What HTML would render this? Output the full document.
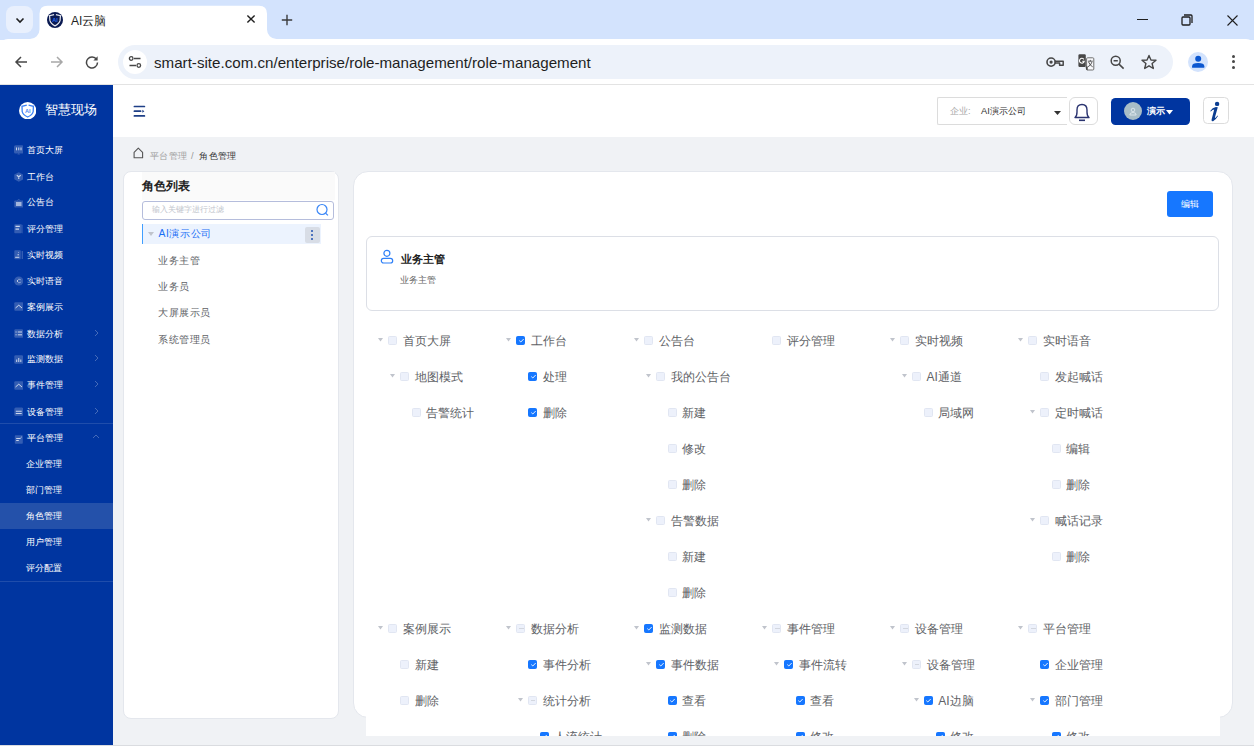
<!DOCTYPE html>
<html><head><meta charset="utf-8">
<style>
*{box-sizing:border-box;margin:0;padding:0}
html,body{width:1254px;height:746px;overflow:hidden;background:#fff;font-family:"Liberation Sans",sans-serif;position:relative}
.a{position:absolute}
.tx{white-space:nowrap;line-height:1}
.ck{width:9px;height:9px;border:1px solid #e1e6f2;border-radius:1.5px;background:#edf1fb}
.tl{font-size:12px;color:#606266;line-height:16px}
</style></head><body>
<!-- TAB STRIP -->
<div class="a" style="left:0;top:0;width:1254px;height:40px;background:#d3e3fd"></div>
<div class="a" style="left:6px;top:6px;width:27px;height:27px;border-radius:8px;background:#e9f0fd"></div>
<svg class="a" style="left:13px;top:13px" width="14" height="14" viewBox="0 0 14 14"><path d="M3.5 5.5 L7 9 L10.5 5.5" fill="none" stroke="#1f1f1f" stroke-width="1.6"/></svg>
<div class="a" style="left:0;top:39px;width:1254px;height:46px;background:#fff;border-radius:8px 8px 0 0"></div>
<!-- active tab -->
<svg class="a" style="left:30px;top:0" width="250" height="40" viewBox="0 0 250 40"><path d="M0 39 A9.5 9.5 0 0 0 9.5 29.5 L9.5 13.7 Q9.5 5.7 17.5 5.7 L229 5.7 Q237 5.7 237 13.7 L237 29.5 A9.5 9.5 0 0 0 246.5 39 Z" fill="#fff"/></svg>
<svg class="a" style="left:47px;top:11.8px" width="16" height="16" viewBox="0 0 16 16"><circle cx="8" cy="8" r="8" fill="#0a1a52"/><path d="M7.1 2.7 L2.6 3.7 L2.9 8.4 Q3.7 11.7 8 13.9 Q12.3 11.7 13.1 8.4 L13.4 3.7 L8.9 2.7" fill="none" stroke="#e8eaf0" stroke-width="1.2"/><text x="8" y="9.6" font-size="5.6" font-family="Liberation Sans" font-weight="bold" fill="#2a6cf0" text-anchor="middle">AI</text></svg>
<div class="a tx" style="left:71px;top:14.5px;font-size:12px;color:#1f1f1f">AI云脑</div>
<svg class="a" style="left:246px;top:14px" width="10" height="10" viewBox="0 0 10 10"><path d="M1.4 1.4 L8.6 8.6 M8.6 1.4 L1.4 8.6" stroke="#1f1f1f" stroke-width="1.4"/></svg>
<svg class="a" style="left:281px;top:14px" width="12" height="12" viewBox="0 0 12 12"><path d="M6 0.8 V11.2 M0.8 6 H11.2" stroke="#3c3c3c" stroke-width="1.4"/></svg>
<!-- window controls -->
<div class="a" style="left:1137px;top:19px;width:11px;height:1.2px;background:#1f1f1f"></div>
<svg class="a" style="left:1181px;top:14px" width="12" height="12" viewBox="0 0 12 12"><rect x="1" y="3" width="8" height="8" rx="1" fill="none" stroke="#1f1f1f" stroke-width="1.3"/><path d="M3 1 H10 Q11 1 11 2 V9" fill="none" stroke="#1f1f1f" stroke-width="1.3"/></svg>
<svg class="a" style="left:1227px;top:15px" width="11" height="11" viewBox="0 0 11 11"><path d="M0.5 0.5 L10.5 10.5 M10.5 0.5 L0.5 10.5" stroke="#1f1f1f" stroke-width="1.1"/></svg>
<!-- TOOLBAR -->

<div class="a" style="left:0;top:84px;width:1254px;height:1px;background:#e3e3e3"></div>
<svg class="a" style="left:14px;top:55px" width="14" height="14" viewBox="0 0 14 14"><path d="M13 7 H2 M7 2 L2 7 L7 12" fill="none" stroke="#474747" stroke-width="1.5"/></svg>
<svg class="a" style="left:50px;top:55px" width="14" height="14" viewBox="0 0 14 14"><path d="M1 7 H12 M7 2 L12 7 L7 12" fill="none" stroke="#a8a8a8" stroke-width="1.5"/></svg>
<svg class="a" style="left:85px;top:55px" width="14" height="14" viewBox="0 0 14 14"><path d="M11.6 4.5 A5.5 5.5 0 1 0 12.5 7.5" fill="none" stroke="#474747" stroke-width="1.5"/><path d="M12.6 1.2 V5.4 H8.4 Z" fill="#474747"/></svg>
<div class="a" style="left:118px;top:45px;width:1055px;height:34px;border-radius:17px;background:#edf2fa"></div>
<div class="a" style="left:123px;top:50px;width:24px;height:24px;border-radius:12px;background:#fff"></div>
<svg class="a" style="left:128px;top:55px" width="14" height="14" viewBox="0 0 14 14"><circle cx="3.2" cy="3.5" r="1.8" fill="none" stroke="#474747" stroke-width="1.3"/><path d="M6 3.5 H12.5 M1.5 10.5 H8" stroke="#474747" stroke-width="1.3"/><circle cx="10.8" cy="10.5" r="1.8" fill="none" stroke="#474747" stroke-width="1.3"/></svg>
<div class="a tx" style="left:154px;top:54.5px;font-size:15.15px;color:#1f1f1f">smart-site.com.cn/enterprise/role-management/role-management</div>
<svg class="a" style="left:1044px;top:54px" width="22" height="16" viewBox="0 0 22 16"><circle cx="7.1" cy="8.1" r="4.1" fill="none" stroke="#474747" stroke-width="1.6"/><circle cx="7.1" cy="8.1" r="1.6" fill="#474747"/><path d="M10.6 7.3 H19.2 V11.3 H15.6 V9.1 H10.6" fill="none" stroke="#474747" stroke-width="1.5" stroke-linejoin="round"/></svg>
<svg class="a" style="left:1077px;top:53px" width="18" height="18" viewBox="0 0 18 18"><rect x="1.4" y="1.2" width="7.4" height="12.8" rx="1.2" fill="#474747"/><rect x="9.6" y="4.8" width="7.2" height="12.2" rx="1" fill="#f8f9fc" stroke="#707070" stroke-width="1"/><path d="M8.6 13.5 L10.8 13.5 L10.6 17.2 Q9.2 17.2 9 16 Z" fill="#474747"/><path d="M6.9 6.4 A2.4 2.4 0 1 0 7.2 8.3 H5.2" fill="none" stroke="#fff" stroke-width="1.1"/><path d="M10.9 8.2 H15.8 M13.3 6.9 V8.2 M11.6 9 Q13.1 12.8 15.7 13.8 M15 9 Q13.8 12.6 10.9 13.8" fill="none" stroke="#474747" stroke-width="0.9"/></svg>
<svg class="a" style="left:1110px;top:54.5px" width="15" height="15" viewBox="0 0 15 15"><circle cx="5.7" cy="5.8" r="4.5" fill="none" stroke="#474747" stroke-width="1.5"/><path d="M3.6 5.8 H7.8 M9 9.1 L13.6 13.6" stroke="#474747" stroke-width="1.5"/></svg>
<svg class="a" style="left:1141px;top:54px" width="16" height="16" viewBox="0 0 16 16"><path d="M8 1.4 L9.95 6 L15 6.3 L11.1 9.5 L12.3 14.5 L8 11.8 L3.7 14.5 L4.9 9.5 L1 6.3 L6.05 6 Z" fill="none" stroke="#474747" stroke-width="1.4" stroke-linejoin="round"/></svg>
<div class="a" style="left:1188px;top:52px;width:20px;height:20px;border-radius:10px;background:#d3e3fd"></div>
<svg class="a" style="left:1190px;top:54px" width="16" height="16" viewBox="0 0 16 16"><circle cx="8.2" cy="4.8" r="3" fill="#0b57d0"/><path d="M2.1 13.8 V12.2 Q2.1 9.1 8.2 9.1 Q14.3 9.1 14.3 12.2 V13.8 Z" fill="#0b57d0"/></svg>
<div class="a" style="left:1232px;top:54.8px;width:3px;height:3px;border-radius:2px;background:#474747"></div>
<div class="a" style="left:1232px;top:60.4px;width:3px;height:3px;border-radius:2px;background:#474747"></div>
<div class="a" style="left:1232px;top:65.7px;width:3px;height:3px;border-radius:2px;background:#474747"></div>

<div class="a" style="left:0;top:85px;width:113px;height:660px;background:#0035a0"></div>
<svg class="a" style="left:19px;top:101.8px" width="17.4" height="17.4" viewBox="0 0 17.4 17.4"><circle cx="8.7" cy="8.7" r="8.7" fill="#fff"/><path d="M7.8 3.2 L3 4.3 L3.2 9.6 Q4 12.8 8.7 15 Q13.4 12.8 14.2 9.6 L14.4 4.3 L9.6 3.2" fill="none" stroke="#3b82f6" stroke-width="1.3"/><text x="8.7" y="11" font-size="5.6" font-family="Liberation Sans" font-weight="bold" fill="#4a8af4" text-anchor="middle">AI</text></svg>
<div class="a tx" style="left:44.5px;top:104px;font-size:12.6px;color:#fff">智慧现场</div>
<svg class="a" style="left:13.5px;top:145.3px" width="9.5" height="10" viewBox="0 0 9.5 10"><rect x="0" y="0.3" width="9.5" height="8.2" rx="1.6" fill="rgba(255,255,255,0.2)"/><path d="M2.5 2.5 V5.3 M4.75 2.5 V5.3 M7 2.5 V5.3" stroke="rgba(255,255,255,0.75)" stroke-width="1"/><path d="M3.2 9.5 L4.75 8.2 L6.3 9.5Z" fill="rgba(255,255,255,0.2)"/></svg>
<div class="a tx" style="left:27.3px;top:136.8px;height:26px;line-height:26px;font-size:9.4px;font-weight:500;color:#fff">首页大屏</div>
<svg class="a" style="left:13.5px;top:172.0px" width="9.5" height="10" viewBox="0 0 9.5 10"><path d="M4.75 0.2 L9.2 2.6 V7.3 L4.75 9.8 L0.3 7.3 V2.6Z" fill="rgba(255,255,255,0.2)"/><path d="M2.8 3.3 L4.75 4.8 L6.7 3.3 M4.75 4.8 V7" fill="none" stroke="rgba(255,255,255,0.75)" stroke-width="1.1"/></svg>
<div class="a tx" style="left:27.3px;top:163.5px;height:26px;line-height:26px;font-size:9.4px;font-weight:500;color:#fff">工作台</div>
<svg class="a" style="left:13.5px;top:197.9px" width="9.5" height="10" viewBox="0 0 9.5 10"><rect x="0.3" y="2.5" width="9" height="7" rx="0.8" fill="rgba(255,255,255,0.2)"/><path d="M3.5 2.5 L4.75 1 L6 2.5" fill="none" stroke="rgba(255,255,255,0.2)" stroke-width="0.8"/><rect x="2" y="4" width="5.5" height="4" fill="rgba(255,255,255,0.55)"/></svg>
<div class="a tx" style="left:27.3px;top:189.4px;height:26px;line-height:26px;font-size:9.4px;font-weight:500;color:#fff">公告台</div>
<svg class="a" style="left:13.5px;top:224.0px" width="9.5" height="10" viewBox="0 0 9.5 10"><rect x="0.3" y="0.3" width="7.5" height="9" rx="0.8" fill="rgba(255,255,255,0.2)"/><rect x="8.2" y="0.8" width="1.2" height="8.5" fill="rgba(255,255,255,0.15)"/><path d="M1.5 2.3 H5.8 M1.5 5.2 H5" stroke="rgba(255,255,255,0.75)" stroke-width="1.3"/></svg>
<div class="a tx" style="left:27.3px;top:215.5px;height:26px;line-height:26px;font-size:9.4px;font-weight:500;color:#fff">评分管理</div>
<svg class="a" style="left:13.5px;top:250.1px" width="9.5" height="10" viewBox="0 0 9.5 10"><rect x="0.3" y="0.3" width="6.5" height="9" rx="0.8" fill="rgba(255,255,255,0.2)"/><rect x="7.6" y="1" width="1.4" height="8" fill="rgba(255,255,255,0.2)"/><path d="M1.2 7.3 H5.3 M3.5 4.8 H5 M4.5 2.5 H5" stroke="rgba(255,255,255,0.75)" stroke-width="1"/></svg>
<div class="a tx" style="left:27.3px;top:241.6px;height:26px;line-height:26px;font-size:9.4px;font-weight:500;color:#fff">实时视频</div>
<svg class="a" style="left:13.5px;top:276.1px" width="9.5" height="10" viewBox="0 0 9.5 10"><circle cx="4.75" cy="5" r="4.6" fill="rgba(255,255,255,0.2)"/><path d="M3 5 L4.5 3.5 M3 5 L4.5 6.5 M5.3 2.8 L6.6 4.2 M5.3 7.2 L6.6 5.8" stroke="rgba(255,255,255,0.75)" stroke-width="0.9"/></svg>
<div class="a tx" style="left:27.3px;top:267.6px;height:26px;line-height:26px;font-size:9.4px;font-weight:500;color:#fff">实时语音</div>
<svg class="a" style="left:13.5px;top:302.2px" width="9.5" height="10" viewBox="0 0 9.5 10"><rect x="0.3" y="0.3" width="9" height="8.5" rx="1" fill="rgba(255,255,255,0.2)"/><path d="M1.5 6 L4.75 3.2 L8 6" fill="none" stroke="rgba(255,255,255,0.75)" stroke-width="1"/></svg>
<div class="a tx" style="left:27.3px;top:293.7px;height:26px;line-height:26px;font-size:9.4px;font-weight:500;color:#fff">案例展示</div>
<svg class="a" style="left:13.5px;top:329.0px" width="9.5" height="10" viewBox="0 0 9.5 10"><rect x="0.3" y="0.3" width="9" height="8.5" rx="1.3" fill="rgba(255,255,255,0.2)"/><path d="M3.8 3 H8 M3.8 5.8 H8 M1.5 3 H2.6 M1.5 5.8 H2.6" stroke="rgba(255,255,255,0.75)" stroke-width="1"/></svg>
<div class="a tx" style="left:27.3px;top:320.5px;height:26px;line-height:26px;font-size:9.4px;font-weight:500;color:#fff">数据分析</div>
<svg class="a" style="left:94px;top:328.5px" width="5" height="8" viewBox="0 0 5 8"><path d="M1 1 L4 4 L1 7" fill="none" stroke="rgba(255,255,255,0.3)" stroke-width="0.9"/></svg>
<svg class="a" style="left:13.5px;top:354.8px" width="9.5" height="10" viewBox="0 0 9.5 10"><rect x="0.3" y="0.3" width="9" height="8.5" rx="1.3" fill="rgba(255,255,255,0.2)"/><path d="M2.7 7 V4.5 M4.75 7 V3 M6.8 7 V4.5" stroke="rgba(255,255,255,0.75)" stroke-width="1"/></svg>
<div class="a tx" style="left:27.3px;top:346.3px;height:26px;line-height:26px;font-size:9.4px;font-weight:500;color:#fff">监测数据</div>
<svg class="a" style="left:94px;top:354.3px" width="5" height="8" viewBox="0 0 5 8"><path d="M1 1 L4 4 L1 7" fill="none" stroke="rgba(255,255,255,0.3)" stroke-width="0.9"/></svg>
<svg class="a" style="left:13.5px;top:380.5px" width="9.5" height="10" viewBox="0 0 9.5 10"><rect x="0.3" y="0.3" width="9" height="8.5" rx="1" fill="rgba(255,255,255,0.2)"/><path d="M1.5 6 L4.75 3.2 L8 6" fill="none" stroke="rgba(255,255,255,0.75)" stroke-width="1"/></svg>
<div class="a tx" style="left:27.3px;top:372.0px;height:26px;line-height:26px;font-size:9.4px;font-weight:500;color:#fff">事件管理</div>
<svg class="a" style="left:94px;top:380.0px" width="5" height="8" viewBox="0 0 5 8"><path d="M1 1 L4 4 L1 7" fill="none" stroke="rgba(255,255,255,0.3)" stroke-width="0.9"/></svg>
<svg class="a" style="left:13.5px;top:407.2px" width="9.5" height="10" viewBox="0 0 9.5 10"><rect x="0.3" y="0.5" width="9" height="8.5" rx="1.5" fill="rgba(255,255,255,0.2)"/><path d="M1.8 4.3 H7.7 M1.8 6.5 H7.7" stroke="rgba(255,255,255,0.75)" stroke-width="1.1"/></svg>
<div class="a tx" style="left:27.3px;top:398.7px;height:26px;line-height:26px;font-size:9.4px;font-weight:500;color:#fff">设备管理</div>
<svg class="a" style="left:94px;top:406.7px" width="5" height="8" viewBox="0 0 5 8"><path d="M1 1 L4 4 L1 7" fill="none" stroke="rgba(255,255,255,0.3)" stroke-width="0.9"/></svg>
<svg class="a" style="left:13.5px;top:433.7px" width="9.5" height="10" viewBox="0 0 9.5 10"><rect x="0.8" y="1.2" width="8" height="8.5" rx="0.8" fill="rgba(255,255,255,0.2)"/><path d="M2.2 4.5 H6.5 M2.2 6.5 H4.8" stroke="rgba(255,255,255,0.75)" stroke-width="1.1"/><path d="M6.5 4 L7.8 2.8" stroke="rgba(255,255,255,0.75)" stroke-width="0.8"/></svg>
<div class="a tx" style="left:27.3px;top:425.2px;height:26px;line-height:26px;font-size:9.4px;font-weight:500;color:#fff">平台管理</div>
<svg class="a" style="left:92px;top:434.2px" width="8" height="5" viewBox="0 0 8 5"><path d="M1 4 L4 1 L7 4" fill="none" stroke="rgba(255,255,255,0.3)" stroke-width="0.9"/></svg>
<div class="a" style="left:0;top:422.5px;width:113px;height:1px;background:rgba(255,255,255,0.12)"></div>
<div class="a" style="left:0;top:503px;width:113px;height:26px;background:#2451aa"></div>
<div class="a tx" style="left:26.3px;top:450.9px;height:26px;line-height:26px;font-size:9.4px;font-weight:500;color:#fff">企业管理</div>
<div class="a tx" style="left:26.3px;top:477.1px;height:26px;line-height:26px;font-size:9.4px;font-weight:500;color:#fff">部门管理</div>
<div class="a tx" style="left:26.3px;top:503.0px;height:26px;line-height:26px;font-size:9.4px;font-weight:500;color:#fff">角色管理</div>
<div class="a tx" style="left:26.3px;top:528.8px;height:26px;line-height:26px;font-size:9.4px;font-weight:500;color:#fff">用户管理</div>
<div class="a tx" style="left:26.3px;top:554.9px;height:26px;line-height:26px;font-size:9.4px;font-weight:500;color:#fff">评分配置</div>
<div class="a" style="left:0;top:581px;width:113px;height:1px;background:rgba(255,255,255,0.12)"></div>
<!-- HEADER -->
<div class="a" style="left:113px;top:85px;width:1141px;height:52px;background:#fff"></div>
<svg class="a" style="left:133px;top:105px" width="13" height="12" viewBox="0 0 13 12"><path d="M1.4 1.5 H11.4 M1.4 6.2 H7.6 M1.4 10.9 H11.4" stroke="#1e3f86" stroke-width="1.7" stroke-linecap="round"/><path d="M9.3 4.7 L11.4 6.2 L9.3 7.7Z" fill="#1e3f86"/></svg>
<div class="a" style="left:936.5px;top:97px;width:130px;height:27.5px;border:1px solid #dcdcdc;border-right:none;border-radius:2px 0 0 2px;background:#fff"></div>
<div class="a tx" style="left:950px;top:106.5px;font-size:9.3px;color:#aaa">企业:</div>
<div class="a tx" style="left:981px;top:106.5px;font-size:9.3px;color:#333">AI演示公司</div>
<svg class="a" style="left:1054px;top:111px" width="7" height="4" viewBox="0 0 7 4"><path d="M0 0 H7 L3.5 4Z" fill="#333"/></svg>
<div class="a" style="left:1068.5px;top:97px;width:29.5px;height:27.5px;border:1px solid #dcdcdc;border-radius:6px;background:#fff"></div>
<svg class="a" style="left:1073px;top:103px" width="18" height="19" viewBox="0 0 18 19"><path d="M2 14.5 Q4 13 4 9 L4 7 Q4 1.5 9 1.5 Q14 1.5 14 7 L14 9 Q14 13 16 14.5 Z" fill="none" stroke="#2b3470" stroke-width="1.4" stroke-linejoin="round"/><path d="M6 17.3 H12" stroke="#2b3470" stroke-width="1.6"/></svg>
<div class="a" style="left:1111px;top:98px;width:79px;height:27px;border-radius:4.5px;background:#0035a0"></div>
<svg class="a" style="left:1124px;top:102px" width="18" height="18" viewBox="0 0 18 18"><circle cx="9" cy="9" r="9" fill="#a8bdc7"/><circle cx="9" cy="8" r="1.8" fill="none" stroke="#e6eef2" stroke-width="0.8"/><path d="M5.8 13 Q5.8 10.5 9 10.5 Q12.2 10.5 12.2 13 Z" fill="none" stroke="#e6eef2" stroke-width="0.8"/></svg>
<div class="a tx" style="left:1147px;top:106px;font-size:9.4px;font-weight:bold;color:#fff">演示</div>
<svg class="a" style="left:1166px;top:110px" width="7" height="4.5" viewBox="0 0 7 4.5"><path d="M0 0 H7 L3.5 4.5Z" fill="#fff"/></svg>
<div class="a" style="left:1203px;top:97.3px;width:25.7px;height:26.7px;border:1px solid #dcdcdc;border-radius:4.5px;background:#fff"></div>
<svg class="a" style="left:1203px;top:97px" width="26" height="28" viewBox="0 0 26 28"><circle cx="14.1" cy="6.9" r="2.2" fill="#0a3d91"/><path d="M7.2 13.9 Q9.4 10.6 12.9 10.1 L14.8 10.3 L11.9 20.5 Q11.9 21.3 12.8 20.6 L14.6 18.6 L15 19.1 Q12.6 23.3 10.1 24.3 Q8.2 24.6 8.6 22.4 L11.2 12.6 Q9.6 12.8 7.8 14.4 Z" fill="#0a3d91"/></svg>
<!-- CONTENT BG -->
<div class="a" style="left:113px;top:137px;width:1141px;height:608px;background:#f0f2f5"></div>
<div class="a" style="left:0;top:745px;width:1254px;height:1px;background:#dadce0"></div>
<!-- breadcrumb -->
<svg class="a" style="left:132.5px;top:146.5px" width="11" height="12" viewBox="0 0 11 12"><path d="M1.1 5.3 L5.3 1.2 L9.6 5.3 V10.8 H1.1 Z" fill="none" stroke="#555" stroke-width="1.1" stroke-linejoin="round"/></svg>
<div class="a tx" style="left:149.8px;top:150.6px;font-size:9.4px;letter-spacing:0.4px;color:#a0a0a0">平台管理</div><div class="a tx" style="left:191px;top:150.6px;font-size:9.4px;color:#999">/</div><div class="a tx" style="left:199.2px;top:150.6px;font-size:9.4px;letter-spacing:0.4px;color:#333">角色管理</div>
<!-- LEFT CARD -->
<div class="a" style="left:123px;top:171px;width:215.5px;height:547.5px;border:1px solid #e4e7ed;border-radius:8px;background:#fff"></div>
<div class="a" style="left:141.5px;top:172px;width:193px;height:28px;background:#fafafa"></div>
<div class="a tx" style="left:142px;top:179.5px;font-size:12.2px;font-weight:bold;color:#222">角色列表</div>
<div class="a" style="left:141.5px;top:201px;width:192px;height:18.5px;border:1px solid #b5bddc;border-radius:3px;background:#fff"></div>
<div class="a tx" style="left:152px;top:206.2px;font-size:7.85px;color:#c0c4cc">输入关键字进行过滤</div>
<svg class="a" style="left:316px;top:202.5px" width="13" height="14" viewBox="0 0 13 14"><circle cx="6" cy="6.5" r="5" fill="none" stroke="#3a86f7" stroke-width="1.2"/><path d="M9.6 10.2 L12 12.4" stroke="#3a86f7" stroke-width="1.2"/></svg>
<div class="a" style="left:142px;top:224px;width:178.5px;height:20px;background:#ecf3fe;border-left:1px solid #409eff"></div>
<svg class="a" style="left:148px;top:232px" width="6" height="4" viewBox="0 0 6 4"><path d="M0 0 H6 L3 4Z" fill="#c0c4cc"/></svg>
<div class="a tx" style="left:158.5px;top:228.5px;font-size:10.4px;letter-spacing:0.55px;color:#1a6ef5">AI演示公司</div>
<div class="a" style="left:305px;top:226.5px;width:15px;height:16px;border-radius:2px;background:#d8dde6"></div>
<div class="a" style="left:311px;top:229.8px;width:2px;height:2px;border-radius:1px;background:#2250b0"></div>
<div class="a" style="left:311px;top:233.8px;width:2px;height:2px;border-radius:1px;background:#2250b0"></div>
<div class="a" style="left:311px;top:237.8px;width:2px;height:2px;border-radius:1px;background:#2250b0"></div>
<div class="a tx" style="left:158px;top:255.5px;font-size:10.4px;letter-spacing:0.5px;color:#606266">业务主管</div>
<div class="a tx" style="left:158px;top:281.8px;font-size:10.4px;letter-spacing:0.5px;color:#606266">业务员</div>
<div class="a tx" style="left:158px;top:308.2px;font-size:10.4px;letter-spacing:0.5px;color:#606266">大屏展示员</div>
<div class="a tx" style="left:158px;top:334.6px;font-size:10.4px;letter-spacing:0.5px;color:#606266">系统管理员</div>
<!-- MAIN CARD -->
<div class="a" style="left:352.5px;top:171px;width:880px;height:547px;border:1px solid #e4e7ed;border-radius:15px;background:#fff"></div>
<div class="a" style="left:366px;top:700px;width:853.5px;height:36px;background:#fff"></div>
<div class="a" style="left:1167px;top:191px;width:45.5px;height:25.5px;border-radius:3px;background:#1677ff"></div>
<div class="a tx" style="left:1180.5px;top:200.3px;font-size:9.3px;color:#fff">编辑</div>
<div class="a" style="left:366px;top:236px;width:853px;height:74.5px;border:1px solid #dcdfe6;border-radius:6px;background:#fff"></div>
<svg class="a" style="left:380px;top:249px" width="14" height="16" viewBox="0 0 14 16"><circle cx="6.9" cy="4.3" r="3" fill="none" stroke="#2f80f7" stroke-width="1.2"/><rect x="1.3" y="9.4" width="11.4" height="4.6" rx="2.3" fill="none" stroke="#2f80f7" stroke-width="1.2"/></svg>
<div class="a tx" style="left:400.5px;top:253.6px;font-size:11px;font-weight:bold;color:#222">业务主管</div>
<div class="a tx" style="left:400px;top:275.2px;font-size:9.4px;color:#666">业务主管</div>

<div class="a" style="left:366px;top:320px;width:854px;height:416px;overflow:hidden">
<svg class="a" style="left:12.4px;top:18.2px" width="5" height="3.5" viewBox="0 0 5 3.5"><path d="M0 0 H5 L2.5 3.5Z" fill="#c0c4cc"/></svg>
<div class="a ck" style="left:22.4px;top:15.8px"></div>
<div class="a tx tl" style="left:36.9px;top:12.8px">首页大屏</div>
<svg class="a" style="left:24.1px;top:54.2px" width="5" height="3.5" viewBox="0 0 5 3.5"><path d="M0 0 H5 L2.5 3.5Z" fill="#c0c4cc"/></svg>
<div class="a ck" style="left:34.1px;top:51.8px"></div>
<div class="a tx tl" style="left:48.6px;top:48.8px">地图模式</div>
<div class="a ck" style="left:45.8px;top:87.8px"></div>
<div class="a tx tl" style="left:60.3px;top:84.8px">告警统计</div>
<svg class="a" style="left:140.4px;top:18.2px" width="5" height="3.5" viewBox="0 0 5 3.5"><path d="M0 0 H5 L2.5 3.5Z" fill="#c0c4cc"/></svg>
<div class="a ck" style="left:150.4px;top:15.8px;background:#1677ff;border-color:#1677ff"><svg width="9" height="9" viewBox="0 0 9 9" style="position:absolute;left:-0.5px;top:-0.5px"><path d="M2.3 4.6 L3.8 6 L6.7 3" fill="none" stroke="#fff" stroke-width="0.9"/></svg></div>
<div class="a tx tl" style="left:164.9px;top:12.8px">工作台</div>
<div class="a ck" style="left:162.1px;top:51.8px;background:#1677ff;border-color:#1677ff"><svg width="9" height="9" viewBox="0 0 9 9" style="position:absolute;left:-0.5px;top:-0.5px"><path d="M2.3 4.6 L3.8 6 L6.7 3" fill="none" stroke="#fff" stroke-width="0.9"/></svg></div>
<div class="a tx tl" style="left:176.6px;top:48.8px">处理</div>
<div class="a ck" style="left:162.1px;top:87.8px;background:#1677ff;border-color:#1677ff"><svg width="9" height="9" viewBox="0 0 9 9" style="position:absolute;left:-0.5px;top:-0.5px"><path d="M2.3 4.6 L3.8 6 L6.7 3" fill="none" stroke="#fff" stroke-width="0.9"/></svg></div>
<div class="a tx tl" style="left:176.6px;top:84.8px">删除</div>
<svg class="a" style="left:268.4px;top:18.2px" width="5" height="3.5" viewBox="0 0 5 3.5"><path d="M0 0 H5 L2.5 3.5Z" fill="#c0c4cc"/></svg>
<div class="a ck" style="left:278.4px;top:15.8px"></div>
<div class="a tx tl" style="left:292.9px;top:12.8px">公告台</div>
<svg class="a" style="left:280.1px;top:54.2px" width="5" height="3.5" viewBox="0 0 5 3.5"><path d="M0 0 H5 L2.5 3.5Z" fill="#c0c4cc"/></svg>
<div class="a ck" style="left:290.1px;top:51.8px"></div>
<div class="a tx tl" style="left:304.6px;top:48.8px">我的公告台</div>
<div class="a ck" style="left:301.8px;top:87.8px"></div>
<div class="a tx tl" style="left:316.3px;top:84.8px">新建</div>
<div class="a ck" style="left:301.8px;top:123.8px"></div>
<div class="a tx tl" style="left:316.3px;top:120.8px">修改</div>
<div class="a ck" style="left:301.8px;top:159.8px"></div>
<div class="a tx tl" style="left:316.3px;top:156.8px">删除</div>
<svg class="a" style="left:280.1px;top:198.2px" width="5" height="3.5" viewBox="0 0 5 3.5"><path d="M0 0 H5 L2.5 3.5Z" fill="#c0c4cc"/></svg>
<div class="a ck" style="left:290.1px;top:195.8px"></div>
<div class="a tx tl" style="left:304.6px;top:192.8px">告警数据</div>
<div class="a ck" style="left:301.8px;top:231.8px"></div>
<div class="a tx tl" style="left:316.3px;top:228.8px">新建</div>
<div class="a ck" style="left:301.8px;top:267.8px"></div>
<div class="a tx tl" style="left:316.3px;top:264.8px">删除</div>
<div class="a ck" style="left:406.4px;top:15.8px"></div>
<div class="a tx tl" style="left:420.9px;top:12.8px">评分管理</div>
<svg class="a" style="left:524.4px;top:18.2px" width="5" height="3.5" viewBox="0 0 5 3.5"><path d="M0 0 H5 L2.5 3.5Z" fill="#c0c4cc"/></svg>
<div class="a ck" style="left:534.4px;top:15.8px"></div>
<div class="a tx tl" style="left:548.9px;top:12.8px">实时视频</div>
<svg class="a" style="left:536.1px;top:54.2px" width="5" height="3.5" viewBox="0 0 5 3.5"><path d="M0 0 H5 L2.5 3.5Z" fill="#c0c4cc"/></svg>
<div class="a ck" style="left:546.1px;top:51.8px"></div>
<div class="a tx tl" style="left:560.6px;top:48.8px">AI通道</div>
<div class="a ck" style="left:557.8px;top:87.8px"></div>
<div class="a tx tl" style="left:572.3px;top:84.8px">局域网</div>
<svg class="a" style="left:652.4px;top:18.2px" width="5" height="3.5" viewBox="0 0 5 3.5"><path d="M0 0 H5 L2.5 3.5Z" fill="#c0c4cc"/></svg>
<div class="a ck" style="left:662.4px;top:15.8px"></div>
<div class="a tx tl" style="left:676.9px;top:12.8px">实时语音</div>
<div class="a ck" style="left:674.1px;top:51.8px"></div>
<div class="a tx tl" style="left:688.6px;top:48.8px">发起喊话</div>
<svg class="a" style="left:664.1px;top:90.2px" width="5" height="3.5" viewBox="0 0 5 3.5"><path d="M0 0 H5 L2.5 3.5Z" fill="#c0c4cc"/></svg>
<div class="a ck" style="left:674.1px;top:87.8px"></div>
<div class="a tx tl" style="left:688.6px;top:84.8px">定时喊话</div>
<div class="a ck" style="left:685.8px;top:123.8px"></div>
<div class="a tx tl" style="left:700.3px;top:120.8px">编辑</div>
<div class="a ck" style="left:685.8px;top:159.8px"></div>
<div class="a tx tl" style="left:700.3px;top:156.8px">删除</div>
<svg class="a" style="left:664.1px;top:198.2px" width="5" height="3.5" viewBox="0 0 5 3.5"><path d="M0 0 H5 L2.5 3.5Z" fill="#c0c4cc"/></svg>
<div class="a ck" style="left:674.1px;top:195.8px"></div>
<div class="a tx tl" style="left:688.6px;top:192.8px">喊话记录</div>
<div class="a ck" style="left:685.8px;top:231.8px"></div>
<div class="a tx tl" style="left:700.3px;top:228.8px">删除</div>
<svg class="a" style="left:12.4px;top:306.2px" width="5" height="3.5" viewBox="0 0 5 3.5"><path d="M0 0 H5 L2.5 3.5Z" fill="#c0c4cc"/></svg>
<div class="a ck" style="left:22.4px;top:303.8px"></div>
<div class="a tx tl" style="left:36.9px;top:300.8px">案例展示</div>
<div class="a ck" style="left:34.1px;top:339.8px"></div>
<div class="a tx tl" style="left:48.6px;top:336.8px">新建</div>
<div class="a ck" style="left:34.1px;top:375.8px"></div>
<div class="a tx tl" style="left:48.6px;top:372.8px">删除</div>
<svg class="a" style="left:140.4px;top:306.2px" width="5" height="3.5" viewBox="0 0 5 3.5"><path d="M0 0 H5 L2.5 3.5Z" fill="#c0c4cc"/></svg>
<div class="a ck" style="left:150.4px;top:303.8px"><div class="a" style="left:1.8px;top:3.3px;width:4.4px;height:0.8px;background:#d3d7df"></div></div>
<div class="a tx tl" style="left:164.9px;top:300.8px">数据分析</div>
<div class="a ck" style="left:162.1px;top:339.8px;background:#1677ff;border-color:#1677ff"><svg width="9" height="9" viewBox="0 0 9 9" style="position:absolute;left:-0.5px;top:-0.5px"><path d="M2.3 4.6 L3.8 6 L6.7 3" fill="none" stroke="#fff" stroke-width="0.9"/></svg></div>
<div class="a tx tl" style="left:176.6px;top:336.8px">事件分析</div>
<svg class="a" style="left:152.1px;top:378.2px" width="5" height="3.5" viewBox="0 0 5 3.5"><path d="M0 0 H5 L2.5 3.5Z" fill="#c0c4cc"/></svg>
<div class="a ck" style="left:162.1px;top:375.8px"><div class="a" style="left:1.8px;top:3.3px;width:4.4px;height:0.8px;background:#d3d7df"></div></div>
<div class="a tx tl" style="left:176.6px;top:372.8px">统计分析</div>
<div class="a ck" style="left:173.8px;top:411.8px;background:#1677ff;border-color:#1677ff"><svg width="9" height="9" viewBox="0 0 9 9" style="position:absolute;left:-0.5px;top:-0.5px"><path d="M2.3 4.6 L3.8 6 L6.7 3" fill="none" stroke="#fff" stroke-width="0.9"/></svg></div>
<div class="a tx tl" style="left:188.3px;top:408.8px">人流统计</div>
<svg class="a" style="left:268.4px;top:306.2px" width="5" height="3.5" viewBox="0 0 5 3.5"><path d="M0 0 H5 L2.5 3.5Z" fill="#c0c4cc"/></svg>
<div class="a ck" style="left:278.4px;top:303.8px;background:#1677ff;border-color:#1677ff"><svg width="9" height="9" viewBox="0 0 9 9" style="position:absolute;left:-0.5px;top:-0.5px"><path d="M2.3 4.6 L3.8 6 L6.7 3" fill="none" stroke="#fff" stroke-width="0.9"/></svg></div>
<div class="a tx tl" style="left:292.9px;top:300.8px">监测数据</div>
<svg class="a" style="left:280.1px;top:342.2px" width="5" height="3.5" viewBox="0 0 5 3.5"><path d="M0 0 H5 L2.5 3.5Z" fill="#c0c4cc"/></svg>
<div class="a ck" style="left:290.1px;top:339.8px;background:#1677ff;border-color:#1677ff"><svg width="9" height="9" viewBox="0 0 9 9" style="position:absolute;left:-0.5px;top:-0.5px"><path d="M2.3 4.6 L3.8 6 L6.7 3" fill="none" stroke="#fff" stroke-width="0.9"/></svg></div>
<div class="a tx tl" style="left:304.6px;top:336.8px">事件数据</div>
<div class="a ck" style="left:301.8px;top:375.8px;background:#1677ff;border-color:#1677ff"><svg width="9" height="9" viewBox="0 0 9 9" style="position:absolute;left:-0.5px;top:-0.5px"><path d="M2.3 4.6 L3.8 6 L6.7 3" fill="none" stroke="#fff" stroke-width="0.9"/></svg></div>
<div class="a tx tl" style="left:316.3px;top:372.8px">查看</div>
<div class="a ck" style="left:301.8px;top:411.8px;background:#1677ff;border-color:#1677ff"><svg width="9" height="9" viewBox="0 0 9 9" style="position:absolute;left:-0.5px;top:-0.5px"><path d="M2.3 4.6 L3.8 6 L6.7 3" fill="none" stroke="#fff" stroke-width="0.9"/></svg></div>
<div class="a tx tl" style="left:316.3px;top:408.8px">删除</div>
<svg class="a" style="left:396.4px;top:306.2px" width="5" height="3.5" viewBox="0 0 5 3.5"><path d="M0 0 H5 L2.5 3.5Z" fill="#c0c4cc"/></svg>
<div class="a ck" style="left:406.4px;top:303.8px"><div class="a" style="left:1.8px;top:3.3px;width:4.4px;height:0.8px;background:#d3d7df"></div></div>
<div class="a tx tl" style="left:420.9px;top:300.8px">事件管理</div>
<svg class="a" style="left:408.1px;top:342.2px" width="5" height="3.5" viewBox="0 0 5 3.5"><path d="M0 0 H5 L2.5 3.5Z" fill="#c0c4cc"/></svg>
<div class="a ck" style="left:418.1px;top:339.8px;background:#1677ff;border-color:#1677ff"><svg width="9" height="9" viewBox="0 0 9 9" style="position:absolute;left:-0.5px;top:-0.5px"><path d="M2.3 4.6 L3.8 6 L6.7 3" fill="none" stroke="#fff" stroke-width="0.9"/></svg></div>
<div class="a tx tl" style="left:432.6px;top:336.8px">事件流转</div>
<div class="a ck" style="left:429.8px;top:375.8px;background:#1677ff;border-color:#1677ff"><svg width="9" height="9" viewBox="0 0 9 9" style="position:absolute;left:-0.5px;top:-0.5px"><path d="M2.3 4.6 L3.8 6 L6.7 3" fill="none" stroke="#fff" stroke-width="0.9"/></svg></div>
<div class="a tx tl" style="left:444.3px;top:372.8px">查看</div>
<div class="a ck" style="left:429.8px;top:411.8px;background:#1677ff;border-color:#1677ff"><svg width="9" height="9" viewBox="0 0 9 9" style="position:absolute;left:-0.5px;top:-0.5px"><path d="M2.3 4.6 L3.8 6 L6.7 3" fill="none" stroke="#fff" stroke-width="0.9"/></svg></div>
<div class="a tx tl" style="left:444.3px;top:408.8px">修改</div>
<svg class="a" style="left:524.4px;top:306.2px" width="5" height="3.5" viewBox="0 0 5 3.5"><path d="M0 0 H5 L2.5 3.5Z" fill="#c0c4cc"/></svg>
<div class="a ck" style="left:534.4px;top:303.8px"><div class="a" style="left:1.8px;top:3.3px;width:4.4px;height:0.8px;background:#d3d7df"></div></div>
<div class="a tx tl" style="left:548.9px;top:300.8px">设备管理</div>
<svg class="a" style="left:536.1px;top:342.2px" width="5" height="3.5" viewBox="0 0 5 3.5"><path d="M0 0 H5 L2.5 3.5Z" fill="#c0c4cc"/></svg>
<div class="a ck" style="left:546.1px;top:339.8px"><div class="a" style="left:1.8px;top:3.3px;width:4.4px;height:0.8px;background:#d3d7df"></div></div>
<div class="a tx tl" style="left:560.6px;top:336.8px">设备管理</div>
<svg class="a" style="left:547.8px;top:378.2px" width="5" height="3.5" viewBox="0 0 5 3.5"><path d="M0 0 H5 L2.5 3.5Z" fill="#c0c4cc"/></svg>
<div class="a ck" style="left:557.8px;top:375.8px;background:#1677ff;border-color:#1677ff"><svg width="9" height="9" viewBox="0 0 9 9" style="position:absolute;left:-0.5px;top:-0.5px"><path d="M2.3 4.6 L3.8 6 L6.7 3" fill="none" stroke="#fff" stroke-width="0.9"/></svg></div>
<div class="a tx tl" style="left:572.3px;top:372.8px">AI边脑</div>
<div class="a ck" style="left:569.5px;top:411.8px;background:#1677ff;border-color:#1677ff"><svg width="9" height="9" viewBox="0 0 9 9" style="position:absolute;left:-0.5px;top:-0.5px"><path d="M2.3 4.6 L3.8 6 L6.7 3" fill="none" stroke="#fff" stroke-width="0.9"/></svg></div>
<div class="a tx tl" style="left:584.0px;top:408.8px">修改</div>
<svg class="a" style="left:652.4px;top:306.2px" width="5" height="3.5" viewBox="0 0 5 3.5"><path d="M0 0 H5 L2.5 3.5Z" fill="#c0c4cc"/></svg>
<div class="a ck" style="left:662.4px;top:303.8px"><div class="a" style="left:1.8px;top:3.3px;width:4.4px;height:0.8px;background:#d3d7df"></div></div>
<div class="a tx tl" style="left:676.9px;top:300.8px">平台管理</div>
<div class="a ck" style="left:674.1px;top:339.8px;background:#1677ff;border-color:#1677ff"><svg width="9" height="9" viewBox="0 0 9 9" style="position:absolute;left:-0.5px;top:-0.5px"><path d="M2.3 4.6 L3.8 6 L6.7 3" fill="none" stroke="#fff" stroke-width="0.9"/></svg></div>
<div class="a tx tl" style="left:688.6px;top:336.8px">企业管理</div>
<svg class="a" style="left:664.1px;top:378.2px" width="5" height="3.5" viewBox="0 0 5 3.5"><path d="M0 0 H5 L2.5 3.5Z" fill="#c0c4cc"/></svg>
<div class="a ck" style="left:674.1px;top:375.8px;background:#1677ff;border-color:#1677ff"><svg width="9" height="9" viewBox="0 0 9 9" style="position:absolute;left:-0.5px;top:-0.5px"><path d="M2.3 4.6 L3.8 6 L6.7 3" fill="none" stroke="#fff" stroke-width="0.9"/></svg></div>
<div class="a tx tl" style="left:688.6px;top:372.8px">部门管理</div>
<div class="a ck" style="left:685.8px;top:411.8px;background:#1677ff;border-color:#1677ff"><svg width="9" height="9" viewBox="0 0 9 9" style="position:absolute;left:-0.5px;top:-0.5px"><path d="M2.3 4.6 L3.8 6 L6.7 3" fill="none" stroke="#fff" stroke-width="0.9"/></svg></div>
<div class="a tx tl" style="left:700.3px;top:408.8px">修改</div>
</div>
</body></html>
